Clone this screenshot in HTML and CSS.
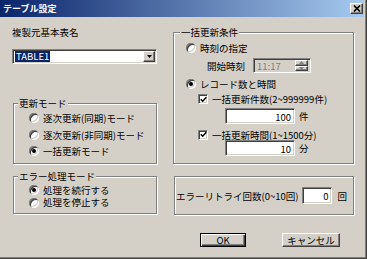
FILE: index.html
```html
<!DOCTYPE html>
<html lang="ja">
<head>
    <meta charset="UTF-8">
    <meta name="viewport" content="width=device-width, initial-scale=1.0">
    <title>テーブル設定</title>
    <link rel="stylesheet" href="styles.css">
</head>
<body>

<div class="window">
    <div class="titlebar">
        <span class="title">テーブル設定</span>
        <span class="close-btn raised">
            <svg width="8" height="7" viewBox="0 0 8 7"><path d="M1 0.5L7 6.5M7 0.5L1 6.5" stroke="#000" stroke-width="1.7" fill="none"/></svg>
        </span>
    </div>

    <div class="client">
        <!-- left side -->
        <div class="col">
            <div class="src-label">複製元基本表名</div>
            <div class="combo field">
                <span class="combo-text"><span class="sel">TABLE1</span></span>
                <span class="drop-btn raised">
                    <svg width="5" height="3" viewBox="0 0 5 3"><path d="M0 0H5L2.5 3Z" fill="#000"/></svg>
                </span>
            </div>

            <div class="group mode-group">
                <span class="group-title">更新モード</span>
                <div class="opt"><span class="radio"></span>逐次更新(同期)モード</div>
                <div class="opt"><span class="radio"></span>逐次更新(非同期)モード</div>
                <div class="opt"><span class="radio checked"></span>一括更新モード</div>
            </div>

            <div class="group err-group">
                <span class="group-title">エラー処理モード</span>
                <div class="opt"><span class="radio checked"></span>処理を続行する</div>
                <div class="opt"><span class="radio"></span>処理を停止する</div>
            </div>
        </div>

        <!-- right side -->
        <div class="col">
            <div class="group cond-group">
                <span class="group-title">一括更新条件</span>
                <div class="opt opt-time"><span class="radio"></span>時刻の指定</div>
                <div class="time-row">
                    <span>開始時刻</span>
                    <div class="time-field field disabled">
                        <span class="time-text">11:17</span>
                        <span class="spin">
                            <span class="spin-btn raised"><svg width="5" height="3" viewBox="0 0 5 3"><path d="M0 3H5L2.5 0Z" fill="#808080"/></svg></span>
                            <span class="spin-btn raised"><svg width="5" height="3" viewBox="0 0 5 3"><path d="M0 0H5L2.5 3Z" fill="#808080"/></svg></span>
                        </span>
                    </div>
                </div>
                <div class="opt opt-rec"><span class="radio checked"></span>レコード数と時間</div>
                <div class="chk-row chk-count">
                    <span class="check"><svg width="7" height="7" viewBox="0 0 7 7"><path d="M0.8 3.2L2.7 5.2L6.3 1.2" stroke="#000" stroke-width="1.5" fill="none"/></svg></span>
                    一括更新件数(2~999999件)
                </div>
                <div class="num-row num-count">
                    <span class="num field">100</span>件
                </div>
                <div class="chk-row chk-time">
                    <span class="check"><svg width="7" height="7" viewBox="0 0 7 7"><path d="M0.8 3.2L2.7 5.2L6.3 1.2" stroke="#000" stroke-width="1.5" fill="none"/></svg></span>
                    一括更新時間(1~1500分)
                </div>
                <div class="num-row num-time">
                    <span class="num field">10</span>分
                </div>
            </div>

            <div class="group retry-group">
                <span>エラーリトライ回数(0~10回)</span>
                <span class="retry-field field">0</span>
                <span class="retry-unit">回</span>
            </div>

            <div class="buttons">
                <button class="btn default">OK</button>
                <button class="btn cancel raised">キャンセル</button>
            </div>
        </div>
    </div>
</div>

</body>
</html>
```

FILE: styles.css
```css
* {
    box-sizing: border-box;
}

body {
    margin: 0;
    background-color: #d4d0c8;
    font-family: "Noto Sans CJK JP", "Noto Sans", sans-serif;
    font-size: 9.5px;
    line-height: 12px;
    color: #000;
}

.window {
    width: 367px;
    height: 259px;
    padding: 0 2px 2px 0;
    border-right: 1px solid #404040;
    border-bottom: 1px solid #404040;
    box-shadow: inset -1px -1px 0 #808080;
    background-color: #d4d0c8;
}

/* classic 3d edges */
.raised {
    background-color: #d4d0c8;
    border: 1px solid;
    border-color: #fff #404040 #404040 #fff;
    box-shadow: inset -1px -1px 0 #808080;
}

.field {
    background-color: #fff;
    border: 1px solid;
    border-color: #808080 #fff #fff #808080;
    box-shadow: inset 1px 1px 0 #404040, inset -1px -1px 0 #d4d0c8;
}

.field.disabled {
    background-color: #d4d0c8;
    color: #808080;
}

/* title bar */
.titlebar {
    height: 17px;
    display: flex;
    align-items: center;
    justify-content: space-between;
    padding: 0 1px 0 3px;
    background: linear-gradient(to right, #0a246a, #a6caf0);
}

.title {
    color: #fff;
    font-weight: bold;
    font-size: 9px;
}

.close-btn {
    width: 13px;
    height: 11px;
    display: flex;
    align-items: center;
    justify-content: center;
}

/* body of dialog */
.client {
    display: grid;
    grid-template-columns: 145px 181px;
    column-gap: 16px;
    padding-left: 12px;
}

.col {
    display: flex;
    flex-direction: column;
}

.src-label {
    margin-top: 9px;
}

.combo {
    margin-top: 11px;
    height: 15px;
    display: flex;
    align-items: center;
    padding: 0 1px 0 2px;
}

.combo-text {
    flex: 1;
    display: flex;
}

.sel {
    background-color: #0a246a;
    color: #fff;
    padding: 0 1px;
    line-height: 11px;
}

.drop-btn {
    width: 12px;
    height: 11px;
    display: flex;
    align-items: center;
    justify-content: center;
}

/* group boxes */
.group {
    position: relative;
    border: 1px solid #808080;
    box-shadow: 1px 1px 0 #fff, inset 1px 1px 0 #fff;
}

.group-title {
    position: absolute;
    top: -7px;
    left: 4px;
    padding: 0 1px;
    background-color: #d4d0c8;
}

.opt {
    display: flex;
    align-items: center;
    gap: 4px;
}

.radio {
    position: relative;
    flex: none;
    width: 10px;
    height: 10px;
    border-radius: 50%;
    background-color: #fff;
    box-shadow: inset 1px 1px 0 #808080, inset -1px -1px 0 #fff,
        inset 2px 2px 0 #404040, inset -2px -2px 0 #d4d0c8;
}

.radio.checked::after {
    content: "";
    position: absolute;
    left: 3px;
    top: 3px;
    width: 4px;
    height: 4px;
    border-radius: 50%;
    background-color: #000;
}

.check {
    flex: none;
    width: 10px;
    height: 10px;
    background-color: #fff;
    border: 1px solid;
    border-color: #808080 #fff #fff #808080;
    box-shadow: inset 1px 1px 0 #404040, inset -1px -1px 0 #d4d0c8;
    display: flex;
    align-items: center;
    justify-content: center;
}

.mode-group {
    margin-top: 39px;
    margin-left: 1px;
    height: 61px;
    padding: 6px 0 0 15px;
}

.mode-group .opt {
    height: 16.5px;
}

.err-group {
    margin-top: 12px;
    margin-left: 1px;
    height: 38px;
    padding: 7px 0 0 15px;
}

.err-group .opt {
    height: 12.5px;
    line-height: 11px;
}

.cond-group {
    margin-top: 15px;
    height: 132px;
    padding: 8px 0 0 12px;
}

.cond-group .group-title {
    left: 6px;
}

.opt-time {
    height: 14px;
}

.time-row {
    margin-top: 3px;
    height: 15px;
    display: flex;
    align-items: center;
    padding-left: 21px;
}

.time-field {
    margin-left: 8px;
    width: 58px;
    height: 15px;
    display: flex;
    align-items: center;
    justify-content: space-between;
    padding: 2px 2px 2px 3px;
}

.spin {
    display: flex;
    flex-direction: column;
    width: 13px;
    height: 11px;
}

.spin-btn {
    flex: 1;
    display: flex;
    align-items: center;
    justify-content: center;
}

.opt-rec {
    margin-top: 4px;
    height: 14px;
}

.chk-row {
    display: flex;
    align-items: center;
    gap: 4px;
    padding-left: 12px;
    height: 12px;
}

.chk-count {
    margin-top: 2px;
}

.chk-time {
    margin-top: 5px;
    height: 11px;
}

.num-row {
    display: flex;
    align-items: center;
    gap: 4px;
    padding-left: 39px;
    margin-top: 3px;
}

.num-time {
    margin-top: 0;
}

.num {
    width: 70px;
    height: 16px;
    text-align: right;
    padding: 2px 3px 0 0;
}

.retry-group {
    margin-top: 12px;
    margin-left: 1px;
    height: 39px;
    display: flex;
    align-items: center;
    padding: 0 6px 0 1px;
}

.retry-field {
    margin-left: auto;
    width: 30px;
    height: 17px;
    text-align: right;
    padding: 2px 3px 0 0;
}

.retry-unit {
    margin-left: 5px;
}

.buttons {
    margin-top: 18px;
    display: flex;
    padding-left: 27px;
    gap: 36px;
}

.btn {
    height: 14px;
    padding: 0;
    font-family: inherit;
    font-size: 9.5px;
    line-height: 11px;
    color: #000;
}

.btn.default {
    width: 46px;
    background-color: #d4d0c8;
    border: 1px solid #000;
    box-shadow: inset 1px 1px 0 #fff, inset -1px -1px 0 #404040, inset -2px -2px 0 #808080;
}

.btn.cancel {
    width: 58px;
}
```
